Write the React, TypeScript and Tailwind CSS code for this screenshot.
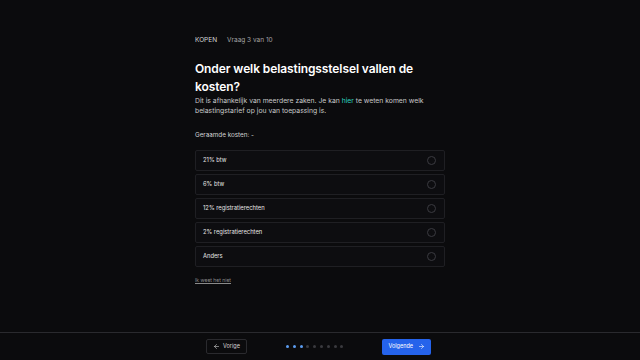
import { ArrowLeft, ArrowRight } from "lucide-react";

const options = ["21% btw", "6% btw", "12% registratierechten", "2% registratierechten", "Anders"];

export default function App() {
  return (
    <div className="flex h-[360px] w-[640px] flex-col bg-[#0b0b0d] font-['Inter',sans-serif] text-white">
      <main className="flex flex-1 justify-center">
        <div className="w-[250px] pt-[36px]">
          {/* Breadcrumb */}
          <div className="flex gap-[10px] text-[6.5px] leading-[9px]">
            <span className="text-[#d4d4d4]">KOPEN</span>
            <span className="text-[#a3a3a3]">Vraag 3 van 10</span>
          </div>

          {/* Question */}
          <h1 className="mt-[15px] text-[12px] font-semibold leading-[18px] tracking-[-0.1px]">
            Onder welk belastingsstelsel vallen de kosten?
          </h1>
          <p className="text-[6.8px] leading-[10px] text-[#c8c8c8]">
            <span>Dit is afhankelijk van meerdere zaken. Je kan </span>
            <span className="text-[#2dd4bf]">hier</span>
            <span> te weten komen welk</span>
            <br />
            <span>belastingstarief op jou van toepassing is.</span>
          </p>

          <div className="mt-[15px] text-[6.3px] leading-[9px] text-[#d4d4d4]">Geraamde kosten: -</div>

          {/* Options */}
          <ul className="mt-[10px] flex flex-col gap-[3px]">
            {options.map((option) => (
              <li
                key={option}
                className="flex h-[21px] items-center justify-between rounded-[2px] border border-[#1f1f23] bg-[#0d0d10] pl-[7px] pr-[8px]"
              >
                <span className="text-[5.8px] text-[#e5e5e5]">{option}</span>
                <span className="h-[9px] w-[9px] rounded-full border border-[#3a3a40]" />
              </li>
            ))}
          </ul>

          <div className="mt-[10px] text-[5px] text-[#8a8a8a] underline">Ik weet het niet</div>
        </div>
      </main>

      {/* Footer */}
      <footer className="flex h-[28px] items-center justify-center border-t border-[#2a2a2e]">
        <div className="mr-[3px] flex w-[225px] items-center justify-between">
          <button className="flex h-[15px] items-center gap-[3px] rounded-[2px] border border-[#2a2a2e] px-[6px] text-[5.5px] text-[#d4d4d4]">
            <ArrowLeft size={7} strokeWidth={2} />
            Vorige
          </button>
          <div className="flex gap-[3.8px]">
            {Array.from({ length: 9 }).map((_, i) => (
              <span
                key={i}
                className={i < 3 ? "h-[3px] w-[3px] rounded-full bg-[#5b9cf0]" : "h-[3px] w-[3px] rounded-full bg-[#3a3a3e]"}
              />
            ))}
          </div>
          <button className="flex h-[16px] items-center gap-[5px] rounded-[2px] bg-[#2563eb] px-[6px] text-[5.5px] text-white">
            Volgende
            <ArrowRight size={7} strokeWidth={2} />
          </button>
        </div>
      </footer>
    </div>
  );
}
